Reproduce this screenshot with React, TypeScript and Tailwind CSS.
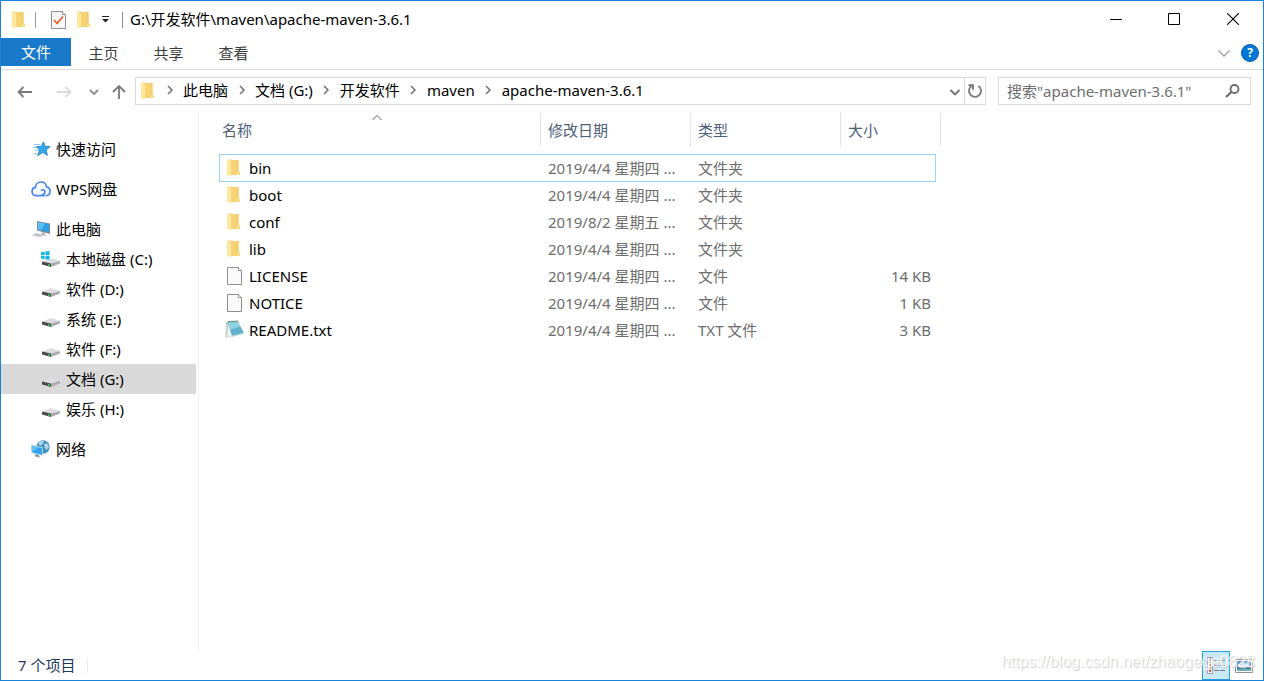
import type { ReactNode } from 'react';

type FileKind = 'folder' | 'file' | 'txt';

interface FileRow {
  name: string;
  kind: FileKind;
  date: string;
  type: string;
  size?: string;
}

const files: FileRow[] = [
  { name: 'bin', kind: 'folder', date: '2019/4/4 星期四 ...', type: '文件夹' },
  { name: 'boot', kind: 'folder', date: '2019/4/4 星期四 ...', type: '文件夹' },
  { name: 'conf', kind: 'folder', date: '2019/8/2 星期五 ...', type: '文件夹' },
  { name: 'lib', kind: 'folder', date: '2019/4/4 星期四 ...', type: '文件夹' },
  { name: 'LICENSE', kind: 'file', date: '2019/4/4 星期四 ...', type: '文件', size: '14 KB' },
  { name: 'NOTICE', kind: 'file', date: '2019/4/4 星期四 ...', type: '文件', size: '1 KB' },
  { name: 'README.txt', kind: 'txt', date: '2019/4/4 星期四 ...', type: 'TXT 文件', size: '3 KB' },
];

const drives = ['本地磁盘 (C:)', '软件 (D:)', '系统 (E:)', '软件 (F:)', '文档 (G:)', '娱乐 (H:)'];
const crumbs = ['此电脑', '文档 (G:)', '开发软件', 'maven', 'apache-maven-3.6.1'];
const selectedDrive = '文档 (G:)';

const FolderIcon = () => (
  <svg width="13" height="18" viewBox="0 0 13 18" className="shrink-0">
    <path d="M3 1h8.5v12H13v3H3z" fill="#f6d374" />
    <path d="M9 1h2.5v12H9z" fill="#f3cd68" />
    <path d="M10 12h2.5v4H10z" fill="#fbdf8e" />
    <path d="M0 0.5 L4 2.5 V17.5 L0 16z" fill="#ffe79f" />
    <path d="M0 0.5h5V3L4 2.5z" fill="#f5d682" />
  </svg>
);

const FileIcon = () => (
  <svg width="15" height="18" viewBox="0 0 15 18" className="shrink-0">
    <path d="M0.5 0.5h11l3 3v14h-14z" fill="#fafafa" stroke="#8d8d8d" />
    <path d="M11.5 0.5v3h3" fill="#fff" stroke="#8d8d8d" />
  </svg>
);

const TxtIcon = () => (
  <svg width="20" height="19" viewBox="0 0 20 19" className="shrink-0">
    <path d="M1 3 L3 1 L13 0.600 L13.500 3z" fill="#8fa9a6" />
    <path d="M1 3 L3.500 2.500 L7 15.500 L2 18 L0.500 17z" fill="#c3cccc" />
    <path d="M3 4 L7 15.500 L2 18z" fill="#eef1f1" />
    <path d="M3 2.500 L13 2 L19 13 L7 16z" fill="#5fb2ca" />
    <path d="M3 2.500 L13 2 L15.500 6.500 L5 10z" fill="#8fd2e1" />
    <path d="M2 18 L7 16 L19 13 L18.500 14.200 L8 17z" fill="#d6dddd" />
    <path d="M3 1.600h10" stroke="#64868b" strokeDasharray="1 1" />
  </svg>
);

const CheckDocIcon = () => (
  <svg width="15" height="18" viewBox="0 0 15 18" className="shrink-0">
    <path d="M0.5 0.5h11l3 3v14h-14z" fill="#f7f7f7" stroke="#8d8d8d" />
    <path d="M11.5 0.5v3h3" fill="#fff" stroke="#8d8d8d" />
    <path d="M3 9 L6 12.3 L12 5.5" fill="none" stroke="#e8652b" strokeWidth="1.8" />
  </svg>
);

const StarIcon = () => (
  <svg width="20" height="16" viewBox="0 0 20 16">
    <path d="M3 3.500h6M2 6.500h5M4 9.500h4M2 12.500h4" stroke="#8cc8f0" />
    <path
      d="M12.500 0.800 L13.900 5.300 L19.200 5.600 L15.200 8.800 L16.400 14.400 L11.800 11.400 L6.500 14.800 L8.600 9.200 L5.400 5.700 L10.200 5.300z"
      fill="#35a7e8"
      stroke="#1b7dc4"
      strokeWidth="0.8"
    />
  </svg>
);

const CloudIcon = () => (
  <svg width="20" height="16" viewBox="0 0 20 16" fill="none" stroke="#4a86ee" strokeWidth="1.7" strokeLinecap="round">
    <path d="M13 14.700H5a4.200 4.200 0 0 1-.6-8.300C4.600 3.300 7 1 10 1c2.900 0 5.200 2 5.500 4.900 2.200.5 3.600 2.200 3.600 4.300 0 2.200-1.500 4-3.600 4.500" />
    <path d="M10.500 9.200c1.600-1 3.500-.2 3.500 1.600 0 1.500-1 2.700-2.500 2.700" />
  </svg>
);

const ComputerIcon = () => (
  <svg width="20" height="18" viewBox="0 0 20 18">
    <path d="M6 1 L19 3.500 V14 L6 10.500z" fill="#7c8993" />
    <path d="M7 2 L18 4.300 V12.500 L7 9.500z" fill="#2c9fe8" />
    <path d="M7 2 L14 3.500 L10 10.300 L7 9.500z" fill="#5bbdf5" />
    <path d="M11 12 L14 12.700 V14.500 L17 15.500 H10z" fill="#aab3ba" />
    <path d="M0 15 L5 13 L14 15 L9 17.500z" fill="#d2d7db" />
    <path d="M2 15.200 L7 13.700 M4 15.800 L9 14.300 M6 16.500 L11 15" stroke="#aeb6bc" strokeWidth="0.6" />
  </svg>
);

const DriveIcon = ({ system = false }: { system?: boolean }) => (
  <svg width="20" height="18" viewBox="0 0 20 18">
    <path d="M1 11.500 L10 8 L19 11 L10 14z" fill="#dcdddf" />
    <path d="M1 11.500 L10 13.500 V17 L1 14.500z" fill="#484b4e" />
    <path d="M10 13.500 L19 11 V13.500 L10 17z" fill="#a9abae" />
    <circle cx="8" cy="15" r="0.900" fill="#3ee35a" />
    {system && (
      <g>
        <path d="M0 1h9v9H0z" fill="#fff" />
        <path d="M0 2.200 L3.600 1.700V5H0zM4.400 1.600 L8.500 1V5H4.400zM0 5.800h3.600v3.300L0 8.600zM4.400 5.800h4.100v4L4.400 9.200z" fill="#12b4ec" />
      </g>
    )}
  </svg>
);

const NetworkIcon = () => (
  <svg width="19" height="18" viewBox="0 0 19 18">
    <circle cx="12" cy="7" r="6.700" fill="#3f8fb8" />
    <path d="M7 3c2-2 4-2.500 6-2l-1 3-3 2zM14 3l3 1 1 4-3 2-2-4z" fill="#a9d8e2" />
    <path d="M0 4.500 L12 7.500 V16 L0 13z" fill="#d3e7f3" />
    <path d="M0.800 5.500 L11.200 8 V14.900 L0.800 12.300z" fill="#2fa4ea" />
    <path d="M0.800 5.500 L8 7.200 L1 12z" fill="#62c0f5" />
    <path d="M4 14 L8 15 V16 L10 17.500 L4 16.500z" fill="#8e9ba3" />
  </svg>
);

const Chevron = ({ d, color = '#707070', width = 1.5 }: { d: string; color?: string; width?: number }) => (
  <svg width="12" height="12" viewBox="0 0 12 12" fill="none" stroke={color} strokeWidth={width} className="shrink-0">
    <path d={d} />
  </svg>
);

const right = 'M4 2l4 4-4 4';
const down = 'M1.500 4l4.500 4.500 4.500-4.500';

const fileIcons: Record<FileKind, ReactNode> = {
  folder: <FolderIcon />,
  file: <FileIcon />,
  txt: <TxtIcon />,
};

const TitleBar = () => (
  <header className="flex h-[37px] items-center pl-[11px]">
    <FolderIcon />
    <span className="ml-[10px] h-4 w-px bg-[#9a9a9a]" />
    <button aria-label="属性" className="ml-[15px]">
      <CheckDocIcon />
    </button>
    <button aria-label="新建文件夹" className="ml-[11px]">
      <FolderIcon />
    </button>
    <button aria-label="自定义快速访问工具栏" className="ml-3">
      <svg width="7" height="7" viewBox="0 0 7 7">
        <path d="M0 0.500h7" stroke="#222" />
        <path d="M0 3h7L3.500 6.500z" fill="#222" />
      </svg>
    </button>
    <span className="ml-[13px] h-4 w-px bg-[#8a8a8a]" />
    <h1 className="ml-[7px] pb-[2px]">G:\开发软件\maven\apache-maven-3.6.1</h1>
    <div className="ml-auto flex h-full">
      <button aria-label="最小化" className="flex w-[58px] items-center justify-center">
        <svg width="12" height="12" stroke="#000"><path d="M0 5.500h12" /></svg>
      </button>
      <button aria-label="最大化" className="flex w-[58px] items-center justify-center pb-px">
        <svg width="12" height="12" fill="none" stroke="#000"><path d="M0.500 0.500h11v11h-11z" /></svg>
      </button>
      <button aria-label="关闭" className="flex w-[60px] items-center justify-center pb-px">
        <svg width="12" height="12" stroke="#000" strokeWidth="1.100"><path d="M0 0l12 12M12 0L0 12" /></svg>
      </button>
    </div>
  </header>
);

const RibbonTabs = () => (
  <div className="flex h-8 items-start border-b border-[#dadbdc] text-[#3c3c3c]">
    <button className="h-7 w-[70px] bg-[#1979ca] text-white">文件</button>
    {['主页', '共享', '查看'].map((tab) => (
      <button key={tab} className="h-[30px] w-[65px]">
        {tab}
      </button>
    ))}
    <div className="ml-auto flex h-[30px] items-center gap-[11px] pr-1">
      <button aria-label="展开功能区">
        <Chevron d="M0.500 3.500L6 9l5.500-5.500" color="#a0a0a0" width={1.3} />
      </button>
      <button
        aria-label="帮助"
        className="flex size-[18px] items-center justify-center rounded-full border border-[#0a5ca8] bg-[#0078d7] text-xs font-bold text-white"
      >
        ?
      </button>
    </div>
  </div>
);

const NavBar = () => (
  <div className="flex h-[42px] items-center pr-3 pl-4">
    <button aria-label="后退" className="pt-[2px]">
      <svg width="16" height="14" fill="none" stroke="#7a7a7a" strokeWidth="1.800"><path d="M15 7H1.500M6.500 2L1.500 7l5 5" /></svg>
    </button>
    <button aria-label="前进" className="ml-[23px] pt-[2px]">
      <svg width="16" height="14" fill="none" stroke="#dcdcdc" strokeWidth="1.800"><path d="M0.500 7h14M9.500 2l5 5-5 5" /></svg>
    </button>
    <button aria-label="最近浏览的位置" className="ml-4 pt-[2px]">
      <Chevron d="M2 4l4 4 4-4" color="#8a8a8a" width={1.8} />
    </button>
    <button aria-label="上移" className="ml-3 pt-[2px]">
      <svg width="14" height="16" fill="none" stroke="#7a7a7a" strokeWidth="1.800"><path d="M7 15V2M1 8l6-6 6 6" /></svg>
    </button>
    <div className="ml-[9px] flex h-7 flex-1 items-center border border-[#d9d9d9] pl-[5px]">
      <FolderIcon />
      <nav className="ml-[2px] flex items-center pb-[2px] whitespace-nowrap">
        {crumbs.map((crumb) => (
          <span key={crumb} className="flex items-center">
            <span className="flex w-[27px] justify-center">
              <Chevron d={right} />
            </span>
            <a href="#">{crumb}</a>
          </span>
        ))}
      </nav>
      <button aria-label="以前的位置" className="mr-[3px] ml-auto pt-[2px]">
        <Chevron d={down} color="#6f6f6f" width={1.8} />
      </button>
      <button aria-label="刷新" className="flex h-full w-[21px] items-center justify-center border-l border-[#d9d9d9]">
        <svg width="16" height="16" fill="none" stroke="#7a7a7a" strokeWidth="1.900">
          <path d="M11.500 3A6 6 0 1 1 4.500 3" />
          <path d="M1.500 2.200h4.500v4.500" />
        </svg>
      </button>
    </div>
    <div className="ml-3 flex h-7 w-[253px] items-center border border-[#d9d9d9] pr-[10px] pl-2">
      <input
        type="search"
        aria-label="搜索"
        placeholder={'搜索"apache-maven-3.6.1"'}
        className="min-w-0 flex-1 outline-none placeholder:text-[#6d6d6d]"
      />
      <svg width="15" height="14" fill="none" stroke="#6a6a6a" strokeWidth="1.800">
        <circle cx="9.500" cy="5" r="4" />
        <path d="M6.500 8L1 13" strokeWidth="2.200" />
      </svg>
    </div>
  </div>
);

const TreeLink = ({ icon, label }: { icon: ReactNode; label: string }) => (
  <a href="#" className="flex h-[30px] items-center pl-[30px]">
    <span className="flex w-[25px]">{icon}</span>
    {label}
  </a>
);

const Sidebar = () => (
  <aside className="flex w-[198px] shrink-0 flex-col gap-[10px] border-r border-[#f0f0f0] pt-[22px] pr-[2px]">
    <TreeLink icon={<StarIcon />} label="快速访问" />
    <TreeLink icon={<CloudIcon />} label="WPS网盘" />
    <div>
      <TreeLink icon={<ComputerIcon />} label="此电脑" />
      {drives.map((drive, i) => (
        <a
          key={drive}
          href="#"
          className={`flex h-[30px] items-center pl-10 ${drive === selectedDrive ? 'bg-[#d9d9d9]' : ''}`}
        >
          <span className="flex w-[25px]">
            <DriveIcon system={i === 0} />
          </span>
          {drive}
        </a>
      ))}
    </div>
    <TreeLink icon={<NetworkIcon />} label="网络" />
  </aside>
);

const HeaderCell = ({ label, span, sorted }: { label: string; span?: number; sorted?: boolean }) => (
  <th colSpan={span} className="relative p-0 pb-[7px] text-left font-normal text-[#4c607a]">
    <div className={`flex h-[34px] items-center border-r border-[#e2e2e2] ${sorted ? 'pl-[3px]' : 'pl-[7px]'}`}>
      {label}
    </div>
    {sorted && (
      <span className="absolute top-0 left-[152px]">
        <Chevron d="M1.500 7L6 2.500 10.500 7" color="#5a5a5a" width={1} />
      </span>
    )}
  </th>
);

const FileTable = () => (
  <main className="min-w-0 flex-1 pt-px pl-5">
    <table className="w-[722px] table-fixed border-separate border-spacing-0">
      <colgroup>
        <col className="w-[322px]" />
        <col className="w-[150px]" />
        <col className="w-[150px]" />
        <col className="w-[95px]" />
        <col className="w-[5px]" />
      </colgroup>
      <thead>
        <tr>
          <HeaderCell label="名称" sorted />
          <HeaderCell label="修改日期" />
          <HeaderCell label="类型" />
          <HeaderCell label="大小" span={2} />
        </tr>
      </thead>
      <tbody>
        {files.map((file, i) => {
          const focused = i === 0;
          const edge = focused ? 'border-y border-[#99d1ff]' : 'pb-[2px]';
          return (
            <tr key={file.name} className={`text-[#6d6d6d] ${focused ? 'h-7' : 'h-[27px]'}`}>
              <td className={`text-black ${edge} ${focused ? 'border-l' : 'pl-px'}`}>
                <div className="flex items-center">
                  <span className={`flex w-[29px] ${file.kind === 'folder' ? 'pl-[7px]' : file.kind === 'file' ? 'pl-[7px]' : 'pl-[5px]'}`}>
                    {fileIcons[file.kind]}
                  </span>
                  {file.name}
                </div>
              </td>
              <td className={`pl-[7px] whitespace-nowrap ${edge}`}>{file.date}</td>
              <td className={`pl-[7px] ${edge}`}>{file.type}</td>
              <td className={`pr-[5px] text-right ${edge} ${focused ? 'border-r' : ''}`}>{file.size}</td>
              <td />
            </tr>
          );
        })}
      </tbody>
    </table>
  </main>
);

const StatusBar = () => (
  <footer className="flex h-[29px] items-center pl-[17px] text-[#1e395b]">
    <span className="pb-[2px]">7 个项目</span>
    <span className="ml-3 h-[14px] w-px bg-[#ececec]" />
    <div className="ml-auto flex h-full items-center pr-[10px]">
      <button
        aria-label="详细信息"
        className="flex h-[29px] w-7 items-center justify-center border border-[#26a0da] bg-[#cbe8f6]"
      >
        <svg width="18" height="17" fill="none">
          <path d="M0.500 0.500h5v16h-5zM0.500 5.500h5M0.500 11h5" fill="#fff" stroke="#9a9a9a" />
          <path d="M2 2.500h2" stroke="#4d7fc0" strokeWidth="2" />
          <path d="M2 8.300h2M2 13.700h2" stroke="#c0392b" strokeWidth="2" />
          <path d="M7 3.500h5M13 3.500h5M7 8.500h5M13 8.500h5M7 13.500h5M13 13.500h5" stroke="#7a7a7a" />
        </svg>
      </button>
      <button aria-label="大图标" className="ml-[5px]">
        <svg width="18" height="14">
          <path d="M0.500 0.500h17v13h-17z" fill="#fff" stroke="#8f8f8f" />
          <path d="M2 2h14v10H2z" fill="#5b9be0" />
          <path d="M3 6l4-3 3 1 4 2v2H3z" fill="#d9ecfb" />
          <path d="M2 8l3-1 4 2 7-1v3H2z" fill="#3d6f96" />
          <path d="M2 10l7-.5 7 .5v2H2z" fill="#6fb0b4" />
        </svg>
      </button>
    </div>
  </footer>
);

const App = () => (
  <div className="relative flex min-h-screen flex-col border border-[#1883d7] bg-white font-['Noto_Sans','Noto_Sans_CJK_SC',sans-serif] text-[15px] leading-5 text-black">
    <TitleBar />
    <RibbonTabs />
    <NavBar />
    <div className="flex flex-1">
      <Sidebar />
      <FileTable />
    </div>
    <StatusBar />
    <span className="pointer-events-none absolute right-2 bottom-[6px] font-['Liberation_Sans',sans-serif] text-base text-white/80 [text-shadow:1px_1px_1px_#cccccc]">
      https://blog.csdn.net/zhaogege0828
    </span>
  </div>
);

export default App;
